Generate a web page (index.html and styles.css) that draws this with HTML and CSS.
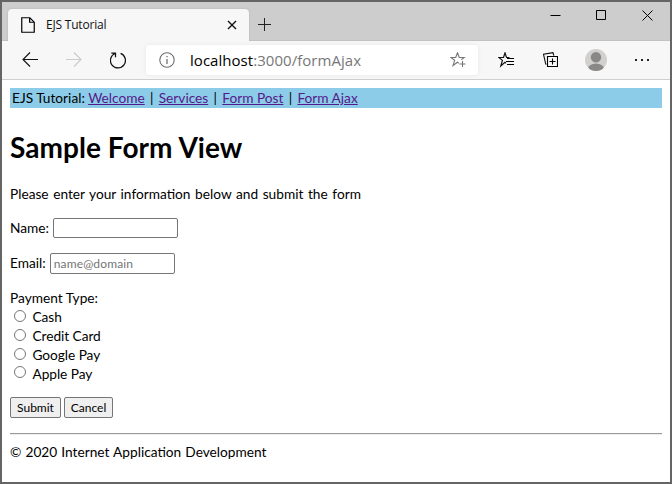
FILE: index.html
```html
<!DOCTYPE html>
<html lang="en">
<head>
<meta charset="utf-8">
<title>EJS Tutorial</title>
<link rel="stylesheet" href="styles.css">
</head>
<body>
<div class="window">
  <header class="titlebar">
    <div class="tab">
      <svg class="tab-icon" width="14" height="16" viewBox="0 0 14 16"><path d="M.75.75h8.1l4.4 4.4v10.1H.75zM8.6.75v4.5h4.6" fill="none" stroke="#000" stroke-width="1.2"/></svg>
      <span class="tab-title">EJS Tutorial</span>
      <svg class="tab-close" width="10" height="10" viewBox="0 0 10 10"><path d="M1 1l8 8M9 1l-8 8" stroke="#111" stroke-width="1.4"/></svg>
    </div>
    <svg class="new-tab" width="13" height="13" viewBox="0 0 13 13"><path d="M6.5 0v13M0 6.5h13" stroke="#222"/></svg>
    <div class="controls">
      <svg width="11" height="11" viewBox="0 0 11 11"><path d="M.5 5.5h10" stroke="#000"/></svg>
      <svg width="11" height="11" viewBox="0 0 11 11"><path d="M.5.5h9v9h-9z" fill="none" stroke="#000"/></svg>
      <svg width="11" height="11" viewBox="0 0 11 11"><path d="M.5.5l10 10M10.5.5l-10 10" stroke="#000"/></svg>
    </div>
  </header>
  <nav class="toolbar">
    <div class="history">
      <svg width="16" height="16" viewBox="0 0 16 16"><path d="M16 7.5H1M8 .5l-7 7 7 7" fill="none" stroke="#111" stroke-width="1.1"/></svg>
      <svg width="16" height="16" viewBox="0 0 16 16"><path d="M0 7.5h15M8 .5l7 7-7 7" fill="none" stroke="#ccc" stroke-width="1.1"/></svg>
      <svg width="16" height="17" viewBox="0 0 16 17"><path d="M10.6 1.4A7.5 7.5 0 1 1 5 1.5M1.3 1H5.5v4.2" fill="none" stroke="#111" stroke-width="1.25"/></svg>
    </div>
    <div class="address">
      <svg width="16" height="16" viewBox="0 0 16 16"><circle cx="8" cy="8" r="7.2" fill="none" stroke="#6e6e6e" stroke-width="1.1"/><path d="M8 7v5M8 4v1.3" stroke="#666" stroke-width="1.2"/></svg>
      <span class="url"><span class="host">localhost</span>:3000/formAjax</span>
      <svg class="favorite" width="16" height="16" viewBox="0 0 16 16"><path d="M8.8 11.2L7.5 10.2 3 13.5l1.7-5.2L.9 5.5h4.8L7.5.7l1.8 4.8h4.8L11.3 7.8" fill="none" stroke="#777" stroke-width="1.1"/><path d="M12.5 9v6M9.5 12h6" stroke="#777" stroke-width="1.1"/></svg>
    </div>
    <div class="actions">
      <svg width="17" height="16" viewBox="0 0 17 16"><path d="M8 11.2l-1-.8L2.8 14l1.6-5.6L.9 5.5h4.6L7 .9l1.5 4.6h3" fill="none" stroke="#111" stroke-width="1.2"/><path d="M9 6.5h7M8 9.5h8M9 12.5h7" stroke="#000" stroke-width="1.1"/></svg>
      <svg width="15" height="16" viewBox="0 0 15 16"><path d="M3.5 12.2L2.7 12 .5 2.3 10 .6l.8 3" fill="none" stroke="#111" stroke-width="1.1"/><path d="M4.5 4.5h10v10h-10zM9.5 6.5v6M6.5 9.5h6" fill="none" stroke="#000" stroke-width="1.1"/></svg>
      <svg width="22" height="22" viewBox="0 0 22 22"><defs><clipPath id="avatar"><circle cx="11" cy="11" r="11"/></clipPath></defs><g clip-path="url(#avatar)"><path d="M0 0h22v22H0z" fill="#d2d0ce"/><circle cx="11" cy="8.3" r="5.2" fill="#8a8886"/><ellipse cx="11" cy="20" rx="8" ry="5.5" fill="#8a8886"/></g></svg>
      <svg width="14" height="2" viewBox="0 0 14 2"><path d="M0 0h2v2H0zM6 0h2v2H6zM12 0h2v2h-2z" fill="#222"/></svg>
    </div>
  </nav>
  <main class="page">
    <div class="site-nav">EJS Tutorial: <a href="#">Welcome</a> <i>|</i> <a href="#">Services</a> <i>|</i> <a href="#">Form Post</a> <i>|</i> <a href="#">Form Ajax</a></div>
    <h1>Sample Form View</h1>
    <p class="intro">Please enter your information below and submit the form</p>
    <form>
      <label class="field">Name: <input type="text"></label>
      <label class="field email">Email: <input type="text" placeholder="name@domain"></label>
      <div class="payment">
        <div>Payment Type:</div>
        <label><input type="radio" name="payment">Cash</label>
        <label><input type="radio" name="payment">Credit Card</label>
        <label><input type="radio" name="payment">Google Pay</label>
        <label><input type="radio" name="payment">Apple Pay</label>
      </div>
      <div class="buttons"><button type="button" class="submit">Submit</button><button type="button" class="cancel">Cancel</button></div>
    </form>
    <hr>
    <footer>© 2020 Internet Application Development</footer>
  </main>
</div>
</body>
</html>
```
FILE: styles.css
```css
* { box-sizing: border-box; }
body { margin: 0; background: #656565; }
svg { display: block; flex: none; }
.window {
  width: 672px; height: 484px; border: 2px solid #656565;
  display: flex; flex-direction: column; background: #fff;
  font-family: "Open Sans", "Noto Sans", sans-serif;
}
.titlebar { height: 39px; background: #cdcdcd; display: flex; align-items: flex-end; border-bottom: 1px solid #c2c2c2; }
.tab {
  width: 241px; height: 32px; margin: 0 0 -1px 6px; padding: 0 12px 0 13px;
  background: #f7f7f7; border-radius: 4px 4px 0 0; box-shadow: 0 0 2px #aaa;
  clip-path: inset(-2px -2px 0 -2px); display: flex; align-items: center;
}
.tab-title { margin: -1px 0 0 11px; font-size: 12px; letter-spacing: -.2px; color: #111; }
.tab-close { margin-left: auto; }
.new-tab { margin: 0 0 9px 9px; }
.controls { margin-left: auto; margin-right: 17px; align-self: flex-start; padding-top: 8px; display: flex; gap: 35px; }
.toolbar { height: 39px; background: #f7f7f7; border-bottom: 1px solid #cfcfcf; display: flex; align-items: center; }
.history { width: 144px; padding-left: 20px; display: flex; align-items: center; gap: 28px; }
.address {
  width: 332px; height: 30px; background: #fff; border-radius: 4px; box-shadow: 0 0 4px #e8e8e8;
  padding: 0 12px 0 13px; display: flex; align-items: center;
}
.url { margin-left: 15px; font-size: 15px; letter-spacing: .04px; color: #777; line-height: 20px; white-space: nowrap; }
.host { color: #000; }
.favorite { margin-left: auto; }
.actions { flex: 1; padding: 0 21px 0 20px; display: flex; align-items: center; justify-content: space-between; }
.page { padding: 8px 8px 0; font: 13.7px/19px Lato, sans-serif; color: #000; }
.site-nav { height: 20px; line-height: 20px; padding-left: 2px; background: #8ccce8; }
.site-nav a { color: #551a8b; text-decoration: underline; }
.site-nav i { display: inline-block; width: 7px; font-style: normal; text-align: center; }
h1 { margin: 20px 0 0; height: 38px; font-size: 28px; line-height: 39px; font-weight: 700; letter-spacing: .05px; }
.intro { margin: 18px 0 0; word-spacing: 1.1px; }
.field { display: flex; align-items: center; gap: 4px; height: 20px; margin-top: 15px; line-height: 18px; }
.email { margin-top: 15px; }
.field input { width: 125px; height: 20px; border: 1px solid #767676; border-radius: 2px; padding: 0 3px; font: 12px Lato, sans-serif; }
.email input { height: 21px; }
input::placeholder { color: #757575; letter-spacing: .15px; }
.payment { margin-top: 15px; }
.payment label { display: flex; align-items: center; height: 19px; letter-spacing: -.05px; }
.payment input { width: 12px; height: 12px; margin: -2px 6.5px 0 4px; }
.payment label:last-child input { margin-top: -4px; }
.buttons { margin-top: 14px; display: flex; gap: 3px; }
button { height: 21px; border: 1px solid #767676; border-radius: 2px; background: #efefef; padding: 0; font: 12px Lato, sans-serif; color: #000; }
.submit { width: 51px; }
.cancel { width: 49px; }
hr { margin: 15px 0 0; height: 2px; border: 0; border-top: 1px solid #999; border-bottom: 1px solid #eee; }
footer { margin-top: 7px; word-spacing: .6px; }
```
